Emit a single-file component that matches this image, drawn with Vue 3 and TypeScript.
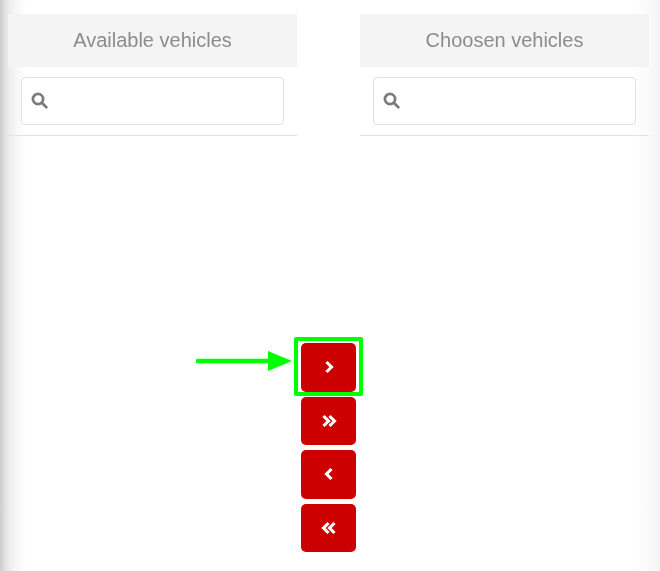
<script setup lang="ts">
interface Action {
  label: string
  points: string[]
  highlighted?: boolean
}

const panels: string[] = ['Available vehicles', 'Choosen vehicles']

const actions: Action[] = [
  { label: 'Move selected right', points: ['5.5,3 10.5,8 5.5,13'], highlighted: true },
  { label: 'Move all right', points: ['2.5,3 7.5,8 2.5,13', '8.5,3 13.5,8 8.5,13'] },
  { label: 'Move selected left', points: ['10.5,3 5.5,8 10.5,13'] },
  { label: 'Move all left', points: ['7.5,3 2.5,8 7.5,13', '13.5,3 8.5,8 13.5,13'] }
]
</script>

<template>
  <main class="page">
    <div class="panels">
      <section v-for="title in panels" :key="title" class="panel">
        <h2 class="panel-title">{{ title }}</h2>
        <div class="search-wrap">
          <label class="search">
            <svg class="search-icon" viewBox="0 0 16 16" aria-hidden="true">
              <circle cx="6.6" cy="6.6" r="4.8" />
              <line x1="10.2" y1="10.2" x2="14.4" y2="14.4" />
            </svg>
            <input class="search-input" type="text" :aria-label="title" />
          </label>
        </div>
      </section>
    </div>

    <div class="actions">
      <div v-for="action in actions" :key="action.label" class="action">
        <button class="action-btn" type="button" :aria-label="action.label">
          <svg class="chevrons" viewBox="0 0 16 16" aria-hidden="true">
            <polyline v-for="p in action.points" :key="p" :points="p" />
          </svg>
        </button>
        <template v-if="action.highlighted">
          <span class="highlight"></span>
          <svg class="pointer" viewBox="0 0 96 22" aria-hidden="true">
            <line x1="2" y1="11" x2="74" y2="11" />
            <polygon points="72,1 96,11 72,21" />
          </svg>
        </template>
      </div>
    </div>
  </main>
</template>

<style scoped>
.page {
  position: relative;
  width: 660px;
  height: 571px;
  overflow: hidden;
  box-sizing: border-box;
  padding: 14px 11px 0 8px;
  display: flex;
  flex-direction: column;
  font-family: "Liberation Sans", Arial, sans-serif;
  filter: blur(0.35px);
  background:
    linear-gradient(to right, #c9ccd0 0, #dcdcdc 4px, #ececec 9px, #f7f7f7 16px, #ffffff 26px) left / 40px 100% no-repeat,
    linear-gradient(to left, #f4f4f4 0, #fbfbfb 14px, #ffffff 28px) right / 40px 100% no-repeat,
    #ffffff;
}

.panels {
  display: flex;
  justify-content: space-between;
}

.panel {
  width: 289px;
  height: 122px;
  box-sizing: border-box;
  border-bottom: 1px solid #e2e2e2;
}

.panel-title {
  margin: 0;
  height: 53px;
  display: flex;
  align-items: center;
  justify-content: center;
  background: #f4f4f4;
  color: #8c8c8c;
  font-size: 20px;
  font-weight: 400;
}

.search-wrap {
  padding: 10px 13px 0 12.5px;
}

.search {
  height: 48px;
  box-sizing: border-box;
  display: flex;
  align-items: center;
  gap: 8px;
  padding: 0 9px;
  background: #ffffff;
  border: 1px solid #e0e0e0;
  border-radius: 4px;
}

.search-icon {
  width: 17px;
  height: 17px;
  flex: none;
  margin-top: -2px;
  fill: none;
  stroke: #7f7b7b;
  stroke-width: 2.6;
  stroke-linecap: round;
}

.search-input {
  flex: 1;
  min-width: 0;
  border: 0;
  outline: 0;
  background: transparent;
}

.actions {
  align-self: center;
  margin-top: 207px;
  display: flex;
  flex-direction: column;
  gap: 5px;
}

.action {
  position: relative;
}

.action-btn {
  display: flex;
  align-items: center;
  justify-content: center;
  width: 55px;
  height: 48.5px;
  padding: 0;
  border: 0;
  border-radius: 5px;
  background: #cc0000;
}

.chevrons {
  width: 16px;
  height: 16px;
  fill: none;
  stroke: #ffffff;
  stroke-width: 3.1;
}

.highlight {
  position: absolute;
  left: -7px;
  top: -6px;
  width: 68.5px;
  height: 58.5px;
  box-sizing: border-box;
  border: 4px solid #00ff00;
  border-radius: 2px;
}

.pointer {
  position: absolute;
  left: -105.5px;
  top: 7px;
  width: 96px;
  height: 22px;
}

.pointer line {
  stroke: #00ff00;
  stroke-width: 4.6;
  stroke-linecap: round;
}

.pointer polygon {
  fill: #00ff00;
}
</style>
